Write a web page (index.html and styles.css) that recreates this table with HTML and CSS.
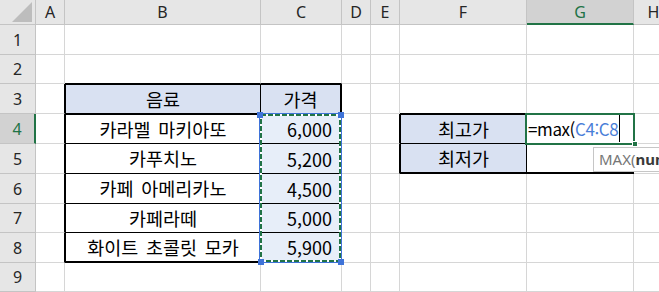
FILE: index.html
```html
<!DOCTYPE html>
<html lang="ko">
<head>
<meta charset="utf-8">
<title>음료 가격</title>
<link rel="stylesheet" href="styles.css">
</head>
<body>
<div class="sheet">
  <!-- column headers -->
  <div class="hd corner"><span class="corner-tri"></span></div>
  <div class="hd">A</div>
  <div class="hd">B</div>
  <div class="hd">C</div>
  <div class="hd">D</div>
  <div class="hd">E</div>
  <div class="hd">F</div>
  <div class="hd sel-col">G</div>
  <div class="hd">H</div>

  <!-- row 1 -->
  <div class="hd">1</div>
  <div class="c"></div><div class="c"></div><div class="c"></div><div class="c"></div>
  <div class="c"></div><div class="c"></div><div class="c"></div><div class="c"></div>

  <!-- row 2 -->
  <div class="hd">2</div>
  <div class="c"></div>
  <div class="c edge-b"></div>
  <div class="c edge-b"></div>
  <div class="c"></div><div class="c"></div><div class="c"></div><div class="c"></div><div class="c"></div>

  <!-- row 3 -->
  <div class="hd">3</div>
  <div class="c edge-r"></div>
  <div class="c t t-top t-left fill ctr">음료</div>
  <div class="c t t-top t-right fill ctr">가격</div>
  <div class="c"></div>
  <div class="c"></div>
  <div class="c edge-b"></div>
  <div class="c edge-b"></div>
  <div class="c"></div>

  <!-- row 4 -->
  <div class="hd sel-row">4</div>
  <div class="c edge-r"></div>
  <div class="c t t-top t-left ctr">카라멜 마키아또</div>
  <div class="c t t-top t-right tint num">6,000</div>
  <div class="c"></div>
  <div class="c edge-r"></div>
  <div class="c t t-top t-left fill ctr">최고가</div>
  <div class="c formula"><span>=max(</span><span class="ref">C4:C8</span><span class="caret"></span></div>
  <div class="c"></div>

  <!-- row 5 -->
  <div class="hd">5</div>
  <div class="c edge-r"></div>
  <div class="c t t-left ctr">카푸치노</div>
  <div class="c t t-right tint num">5,200</div>
  <div class="c"></div>
  <div class="c edge-r"></div>
  <div class="c t t-left t-bottom fill ctr">최저가</div>
  <div class="c t t-right t-bottom"></div>
  <div class="c"></div>

  <!-- row 6 -->
  <div class="hd">6</div>
  <div class="c edge-r"></div>
  <div class="c t t-left ctr">카페 아메리카노</div>
  <div class="c t t-right tint num">4,500</div>
  <div class="c"></div><div class="c"></div><div class="c"></div><div class="c"></div><div class="c"></div>

  <!-- row 7 -->
  <div class="hd">7</div>
  <div class="c edge-r"></div>
  <div class="c t t-left ctr">카페라떼</div>
  <div class="c t t-right tint num">5,000</div>
  <div class="c"></div><div class="c"></div><div class="c"></div><div class="c"></div><div class="c"></div>

  <!-- row 8 -->
  <div class="hd">8</div>
  <div class="c edge-r"></div>
  <div class="c t t-left t-bottom ctr">화이트 초콜릿 모카</div>
  <div class="c t t-right t-bottom tint num">5,900</div>
  <div class="c"></div><div class="c"></div><div class="c"></div><div class="c"></div><div class="c"></div>

  <!-- row 9 -->
  <div class="hd">9</div>
  <div class="c"></div><div class="c"></div><div class="c"></div><div class="c"></div>
  <div class="c"></div><div class="c"></div><div class="c"></div><div class="c"></div>

  <!-- range referenced by the formula (C4:C8) with copy marquee -->
  <div class="ref-range">
    <svg width="81" height="148" viewBox="0 0 81 148">
      <rect class="marquee-base" x="1" y="1" width="79" height="146"/>
      <rect class="marquee" x="1" y="1" width="79" height="146"/>
    </svg>
    <span class="hdl tl"></span>
    <span class="hdl tr"></span>
    <span class="hdl bl"></span>
    <span class="hdl br"></span>
  </div>

  <!-- active cell G4 -->
  <div class="active-cell"><span class="fill-handle"></span></div>

  <!-- function argument hint -->
  <div class="tip">MAX(<b>number1</b>, [number2], ...)</div>
</div>
</body>
</html>
```

FILE: styles.css
```css
* { box-sizing: border-box; }

html, body {
  margin: 0;
  padding: 0;
  background: #fff;
  overflow: hidden;
}

.sheet {
  position: relative;
  display: grid;
  grid-template-columns: 36px 29px 196px 81px 29px 29px 127px 107px 40px;
  grid-template-rows: 25px 30px 29px 30px 30px 30px 30px 29px 30px 29px;
  font-family: "Noto Sans CJK KR", "Noto Sans", sans-serif;
  font-size: 18.5px;
  line-height: 1;
  color: #000;
}

/* row / column headers */
.hd {
  display: flex;
  align-items: center;
  justify-content: center;
  background: #e6e6e6;
  border-right: 1px solid #c4c4c4;
  border-bottom: 1px solid #c4c4c4;
  font-family: "Noto Sans", sans-serif;
  font-size: 16px;
  color: #262626;
}
.corner {
  justify-content: flex-end;
  align-items: flex-end;
  padding: 0 3px 2px 0;
}
.corner-tri {
  width: 20px;
  height: 20px;
  background: #bdbdbd;
  clip-path: polygon(100% 0, 100% 100%, 0 100%);
}
.hd.sel-col {
  background: #d2d2d2;
  color: #217346;
  border-bottom: 2px solid #217346;
}
.hd.sel-row {
  background: #d2d2d2;
  color: #217346;
  border-right: 2px solid #217346;
}

/* cells */
.c {
  display: flex;
  align-items: center;
  min-width: 0;
  white-space: nowrap;
  border-right: 1px solid #d6d6d6;
  border-bottom: 1px solid #d6d6d6;
}
.edge-b { border-bottom-color: #000; }
.edge-r { border-right-color: #000; }
.t {
  border-right-color: #000;
  border-bottom-color: #000;
}
.t-top { border-top: 1px solid #000; }
.t-left { border-left: 1px solid #000; }
.t-right { border-right-width: 2px; }
.t-bottom { border-bottom-width: 2px; }
.fill { background: #d9e1f2; }
.tint { background: #e7eef9; }
.ctr {
  justify-content: center;
  word-spacing: 2.5px;
}
.num {
  justify-content: flex-end;
  padding-right: 8px;
  font-size: 18px;
}
.formula {
  padding-left: 1px;
  font-size: 17px;
  letter-spacing: -0.4px;
}
.ref { color: #4a7ed8; }
.caret {
  display: inline-block;
  width: 1px;
  height: 27px;
  margin-left: 1px;
  background: #000;
}

/* formula reference highlight */
.ref-range {
  position: absolute;
  grid-column: 4 / 5;
  grid-row: 5 / 10;
  top: -1px;
  left: -2px;
  right: 0;
  bottom: 0;
  border: 1px solid #3f73d8;
}
.ref-range svg {
  position: absolute;
  left: 0;
  top: 0;
  overflow: visible;
}
.marquee-base {
  fill: none;
  stroke: #fff;
  stroke-width: 2;
}
.marquee {
  fill: none;
  stroke: #217346;
  stroke-width: 2;
  stroke-dasharray: 5 2;
}
.hdl {
  position: absolute;
  width: 6px;
  height: 6px;
  background: #3f73d8;
}
.hdl.tl { left: -3px; top: -2px; }
.hdl.tr { right: -3px; top: -2px; }
.hdl.bl { left: -2px; bottom: -3px; }
.hdl.br { right: -3px; bottom: -3px; }

/* active cell */
.active-cell {
  position: absolute;
  grid-column: 8 / 9;
  grid-row: 5 / 6;
  top: -1px;
  left: -2px;
  right: -1px;
  bottom: -1px;
  border: 2px solid #217346;
}
.fill-handle {
  position: absolute;
  right: -5px;
  bottom: -4px;
  width: 6px;
  height: 6px;
  background: #217346;
  border: 1px solid #fff;
}

/* argument hint */
.tip {
  position: absolute;
  grid-column: 8 / 9;
  grid-row: 6 / 7;
  left: 66px;
  top: 3px;
  height: 25px;
  padding: 0 5px;
  display: flex;
  align-items: center;
  background: #fff;
  border: 1px solid #c6c6c6;
  font-family: "Noto Sans", sans-serif;
  font-size: 15px;
  color: #767676;
  white-space: nowrap;
}
.tip b { color: #3a3a3a; }
```
